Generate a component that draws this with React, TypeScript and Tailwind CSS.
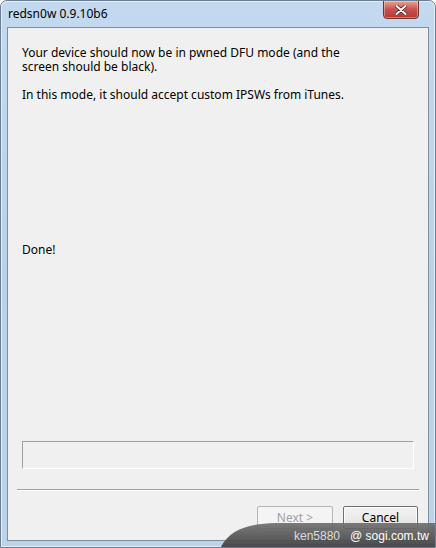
import React from "react";

export default function App() {
  const font = { fontFamily: '"Segoe UI", "Noto Sans", "Open Sans", sans-serif' };
  return (
    <div className="w-[436px] h-[548px] bg-white">
      <div
        className="relative w-[436px] h-[548px] flex flex-col rounded-t-[7px] border border-[#6b7d90] bg-gradient-to-b from-[#c3d9f0] via-[#b9d1ea] to-[#bcd3ec] overflow-hidden"
        style={font}
      >
        {/* inner highlight */}
        <div className="absolute inset-0 rounded-t-[6px] border border-[#e4eefa] pointer-events-none" />
        {/* title bar */}
        <div className="relative h-[26px] flex items-center shrink-0">
          <span className="ml-[7px] mt-[0px] text-[12px] text-black leading-none">redsn0w 0.9.10b6</span>
          <div className="ml-auto mr-[16px] self-start w-[36px] h-[19px] mt-[-1px] rounded-b-[4px] border border-[#6d3430] bg-gradient-to-b from-[#e8a493] via-[#c75050] to-[#b9372c] flex items-center justify-center shadow-[inset_0_0_0_1px_rgba(255,255,255,0.35)]">
            <svg width="12" height="10" viewBox="0 0 12 10">
              <path d="M1.5 1 L10.5 9 M10.5 1 L1.5 9" stroke="#4a2020" strokeWidth="3.4" strokeLinecap="round" />
              <path d="M1.5 1 L10.5 9 M10.5 1 L1.5 9" stroke="#ffffff" strokeWidth="2" strokeLinecap="round" />
            </svg>
          </div>
        </div>
        {/* client */}
        <div className="relative mx-[6px] mb-[6px] flex-1 border border-[#7d8fa3] bg-[#f0f0f0] flex flex-col text-[12px] text-black leading-[14px]">
          <div className="pl-[14px] pr-[14px] pt-[18px]">
            <p className="w-[330px]">Your device should now be in pwned DFU mode (and the screen should be black).</p>
            <p className="mt-[14px]">In this mode, it should accept custom IPSWs from iTunes.</p>
          </div>
          <div className="pl-[14px] mt-[141px]">Done!</div>
          <div className="flex-1" />
          <div className="mx-[14px] h-[28px] border border-[#a0a0a0] border-b-white border-r-white" />
          <div className="mx-[9px] mt-[20px] h-[2px] border-t border-[#a0a0a0] border-b border-b-white" />
          <div className="flex justify-end gap-[10px] mr-[10px] mt-[15px] mb-[11px]">
            <button className="w-[76px] h-[23px] border border-[#b5b5b5] bg-[#f4f4f4] text-[#a0a0a0] rounded-[2px]">Next &gt;</button>
            <button className="w-[75px] h-[23px] border border-[#707070] bg-gradient-to-b from-[#f2f2f2] via-[#ebebeb] to-[#dddddd] text-black rounded-[2px] shadow-[inset_0_0_0_1px_#fcfcfc]">Cancel</button>
          </div>
        </div>
        {/* watermark */}
        <div className="absolute left-[219px] top-[522px] w-[217px] h-[26px] pointer-events-none">
          <svg className="absolute inset-0" width="217" height="26" viewBox="0 0 217 26">
            <defs>
              <linearGradient id="wm" x1="0" y1="0" x2="0" y2="1">
                <stop offset="0" stopColor="#707070" stopOpacity="0.92" />
                <stop offset="1" stopColor="#3a3a3a" stopOpacity="0.92" />
              </linearGradient>
            </defs>
            <path d="M0 26 C 8 8, 25 1, 55 0 L217 0 L217 26 Z" fill="url(#wm)" />
          </svg>
          <div
            className="absolute left-[74px] top-[6px] flex gap-[10px] text-[12px] leading-[15px] whitespace-nowrap"
            style={{ fontFamily: '"Liberation Sans", Arial, sans-serif' }}
          >
            <span className="text-[#dcdcdc]">ken5880</span>
            <span className="text-white">@ sogi.com.tw</span>
          </div>
        </div>
      </div>
    </div>
  );
}
